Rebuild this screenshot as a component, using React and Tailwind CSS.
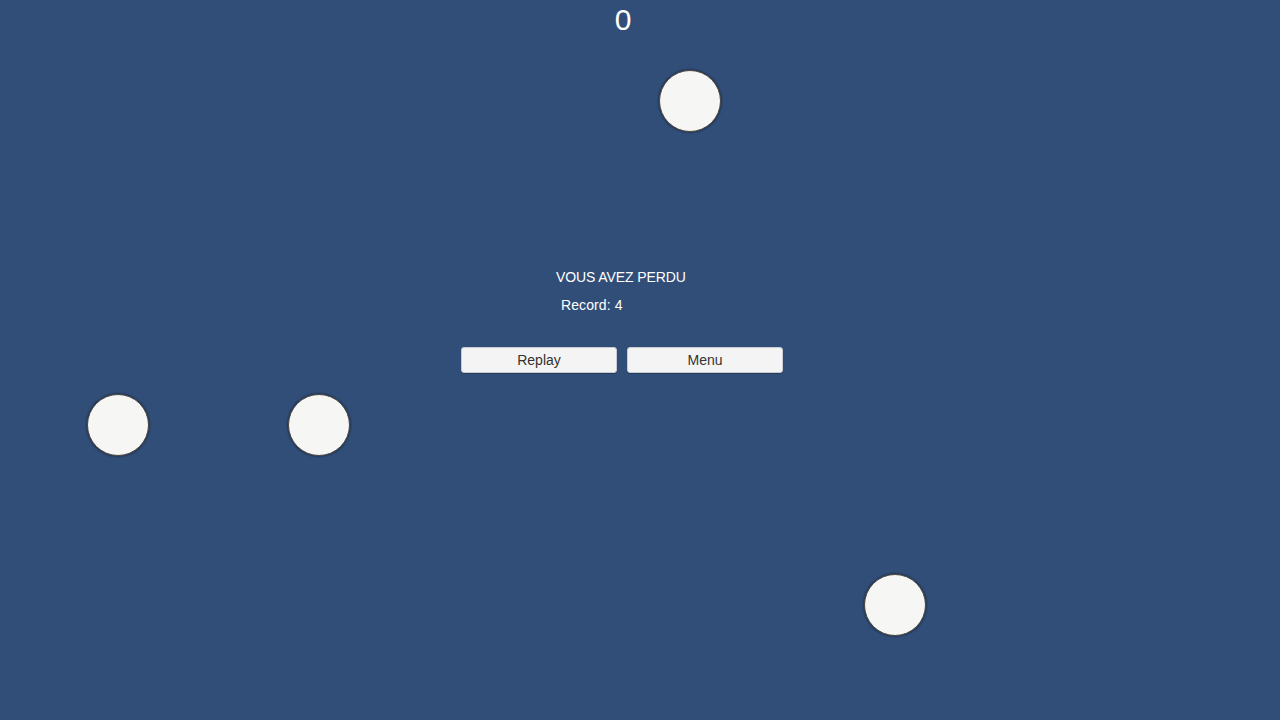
export default function App() {
  const balls = [
    { x: 659, y: 70 },
    { x: 87, y: 394 },
    { x: 288, y: 394 },
    { x: 864, y: 574 },
  ];
  return (
    <div
      className="relative w-[1280px] h-[720px] overflow-hidden bg-[#314e78] text-white"
      style={{ fontFamily: '"Liberation Sans", Arial, sans-serif' }}
    >
      <div className="flex flex-col items-center w-[1246px]">
        <div className="mt-[5px] text-[30px] leading-[30px]">0</div>
      </div>
      <div className="flex flex-col w-[1246px] mt-[234px]">
        <div className="ml-[556px] text-[14px] leading-[16px] tracking-[-0.1px]">VOUS AVEZ PERDU</div>
        <div className="ml-[561px] mt-[12px] text-[14px] leading-[16px] tracking-[0.1px]">Record: 4</div>
        <div className="ml-[461px] mt-[34px] flex gap-[10px]">
          <button className="w-[156px] h-[26px] rounded-[3px] bg-[#f4f4f4] border border-[#c8ccd2] text-[14px] leading-[16px] text-[#333] shadow-[0_1px_0_rgba(0,0,0,0.25)]">
            Replay
          </button>
          <button className="w-[156px] h-[26px] rounded-[3px] bg-[#f4f4f4] border border-[#c8ccd2] text-[14px] leading-[16px] text-[#333] shadow-[0_1px_0_rgba(0,0,0,0.25)]">
            Menu
          </button>
        </div>
      </div>
      {balls.map((b, i) => (
        <div
          key={i}
          className="absolute w-[62px] h-[62px] rounded-full bg-[#f6f6f5] border-[1.5px] border-[#4a4540] shadow-[0_0_2px_1px_rgba(0,0,0,0.3)]"
          style={{ left: b.x, top: b.y }}
        />
      ))}
    </div>
  );
}
